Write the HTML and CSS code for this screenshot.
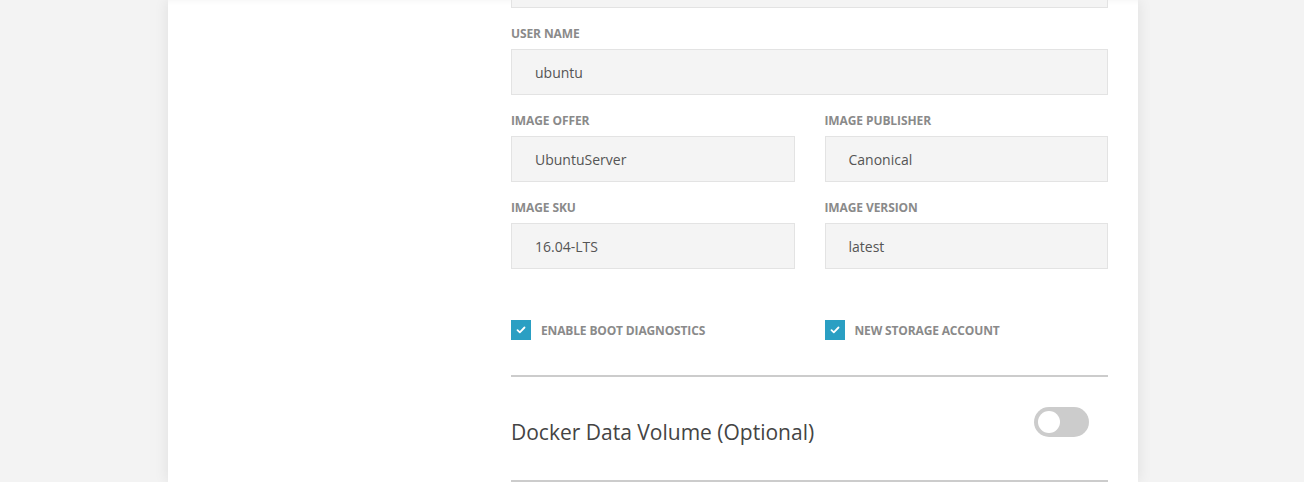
FILE: index.html
```html
<!DOCTYPE html>
<html>
<head>
<meta charset="utf-8">
<link rel="stylesheet" href="styles.css">
</head>
<body>
<div class="page">
  <div class="card">
    <div class="form">
      <div class="input input-cut"></div>

      <div class="field">
        <div class="label">USER NAME</div>
        <div class="input">ubuntu</div>
      </div>

      <div class="row">
        <div class="field">
          <div class="label">IMAGE OFFER</div>
          <div class="input">UbuntuServer</div>
        </div>
        <div class="field">
          <div class="label">IMAGE PUBLISHER</div>
          <div class="input">Canonical</div>
        </div>
      </div>

      <div class="row">
        <div class="field">
          <div class="label">IMAGE SKU</div>
          <div class="input">16.04-LTS</div>
        </div>
        <div class="field">
          <div class="label">IMAGE VERSION</div>
          <div class="input">latest</div>
        </div>
      </div>

      <div class="row checks">
        <label class="check">
          <span class="box"><svg width="10" height="8" viewBox="0 0 10 8"><path d="M1.5 4.2 L3.8 6.3 L8.5 1.5" fill="none" stroke="#fff" stroke-width="1.8" stroke-linecap="round" stroke-linejoin="round"/></svg></span>
          <span class="check-text">ENABLE BOOT DIAGNOSTICS</span>
        </label>
        <label class="check">
          <span class="box"><svg width="10" height="8" viewBox="0 0 10 8"><path d="M1.5 4.2 L3.8 6.3 L8.5 1.5" fill="none" stroke="#fff" stroke-width="1.8" stroke-linecap="round" stroke-linejoin="round"/></svg></span>
          <span class="check-text">NEW STORAGE ACCOUNT</span>
        </label>
      </div>

      <div class="section">
        <h2 class="section-title">Docker Data Volume (Optional)</h2>
        <span class="toggle"><span class="knob"></span></span>
      </div>
    </div>
  </div>
</div>
</body>
</html>
```

FILE: styles.css
```css
* { box-sizing: border-box; }
html, body { margin: 0; padding: 0; }
body {
  background: #f3f3f3;
  font-family: "Open Sans", "Noto Sans", sans-serif;
  height: 482px;
  overflow: hidden;
}
.page {
  padding-left: 168px;
  height: 482px;
}
.card {
  width: 970px;
  height: 482px;
  background: #fff;
  box-shadow: 0 0 14px rgba(0,0,0,0.09), inset 0 6px 6px -6px rgba(0,0,0,0.06);
  padding: 0 30px 0 343px;
  overflow: hidden;
}
.form {
  display: flex;
  flex-direction: column;
}
.input {
  height: 46px;
  background: #f4f4f4;
  border: 1px solid #e3e3e3;
  padding-left: 23px;
  display: flex;
  align-items: center;
  font-size: 14px;
  color: #555;
}
.input-cut {
  height: 8px;
  border-top: none;
}
.field {
  display: flex;
  flex-direction: column;
  flex: 1;
}
.label {
  margin-top: 17px;
  margin-bottom: 7px;
  font-size: 12px;
  line-height: 17px;
  font-weight: 700;
  color: #8a8a8a;
  letter-spacing: -0.1px;
}
.row {
  display: flex;
  gap: 30px;
}
.checks {
  margin-top: 51px;
  padding-bottom: 35px;
  border-bottom: 2px solid #cccccc;
}
.check {
  flex: 1;
  display: flex;
  align-items: center;
  gap: 10px;
}
.box {
  width: 20px;
  height: 20px;
  background: #2a9fc3;
  display: flex;
  align-items: center;
  justify-content: center;
}
.check-text {
  font-size: 12px;
  font-weight: 700;
  color: #8a8a8a;
  letter-spacing: -0.15px;
}
.section {
  display: flex;
  justify-content: space-between;
  align-items: flex-start;
  height: 105px;
  border-bottom: 2px solid #cccccc;
}
.section-title {
  margin: 40px 0 0;
  font-size: 21px;
  font-weight: 400;
  color: #444;
  line-height: 30px;
}
.toggle {
  margin-top: 30px;
  margin-right: 19px;
  width: 55px;
  height: 30px;
  border-radius: 15px;
  background: #cccccc;
  display: flex;
  align-items: center;
  padding-left: 4px;
}
.knob {
  width: 22px;
  height: 22px;
  border-radius: 50%;
  background: #fff;
}
```
